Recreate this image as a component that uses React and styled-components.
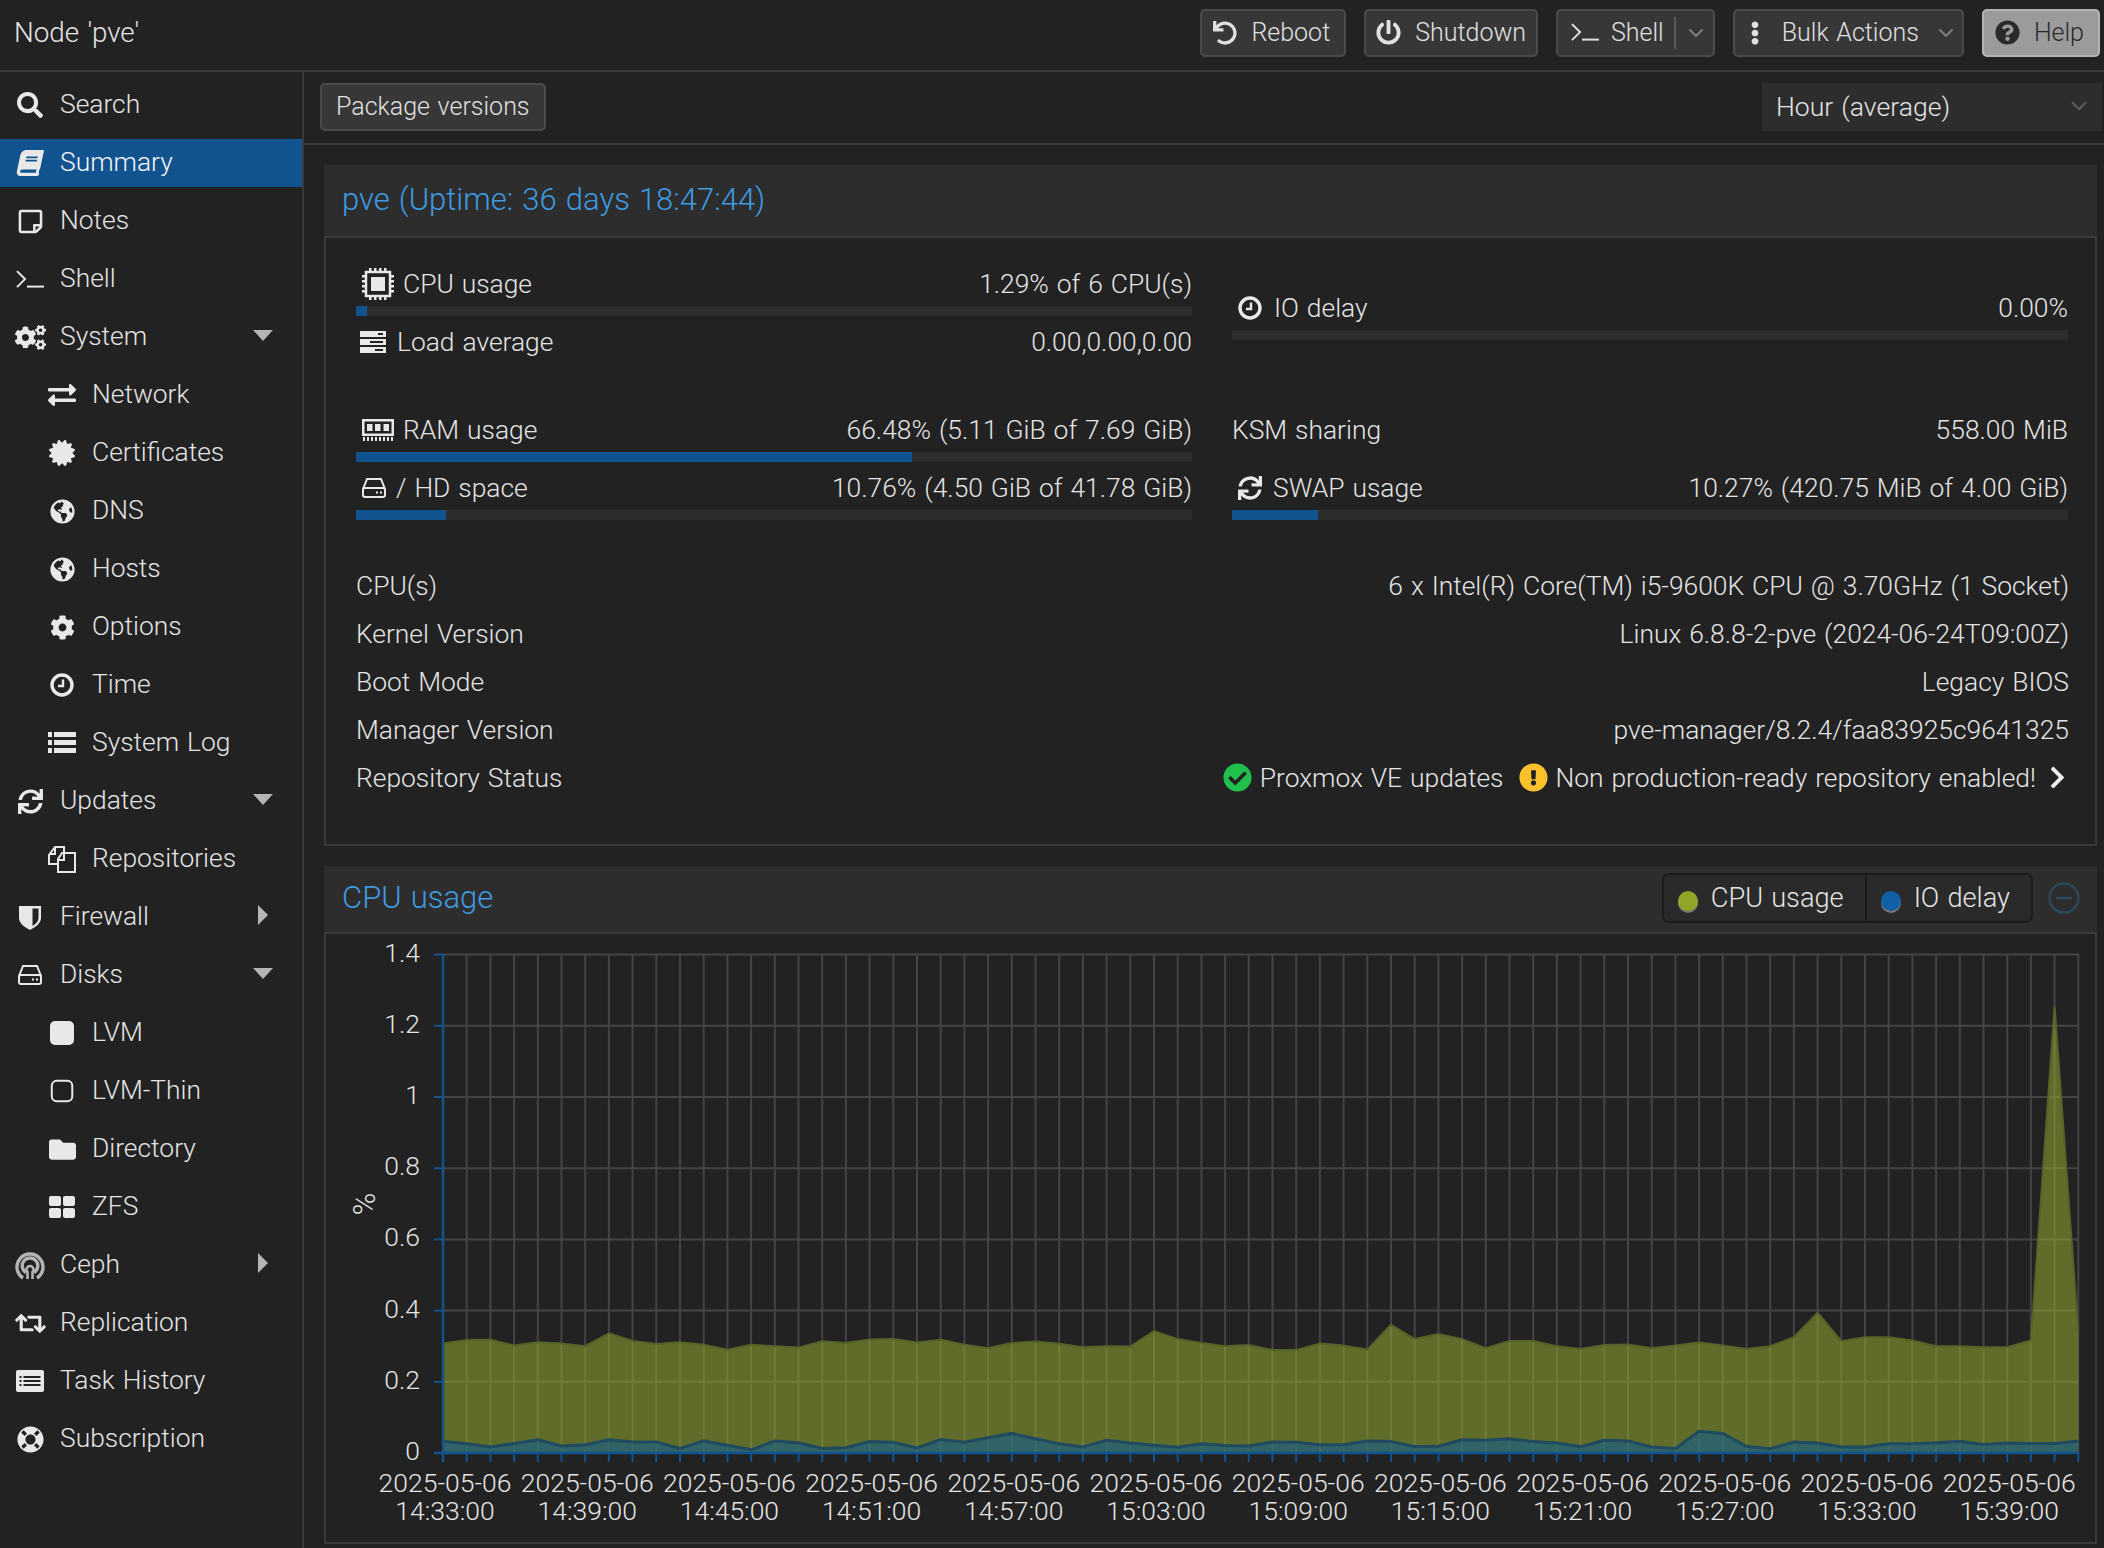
import React from 'react';
import styled, { createGlobalStyle } from 'styled-components';
import {
  FaSearch, FaBook, FaRegStickyNote, FaCogs, FaExchangeAlt, FaCertificate, FaGlobeAmericas, FaCog,
  FaSync, FaFolder, FaRetweet, FaLifeRing, FaUndo, FaPowerOff, FaEllipsisV, FaQuestionCircle,
  FaCheckCircle, FaExclamationCircle, FaChevronRight,
} from 'react-icons/fa';
import { ChevronDown } from 'lucide-react';

const Global = createGlobalStyle`
  html, body { margin: 0; padding: 0; height: 100%; overflow: hidden; background: #222; }
  body {
    font-family: Roboto, "Liberation Sans", Arial, sans-serif;
    font-weight: 300;
    font-size: 26.4px;
    word-spacing: 1.5px;
    color: #e4e4e4;
  }
  * { box-sizing: border-box; }
`;

const Page = styled.div`
  height: 100vh;
  display: flex;
  flex-direction: column;
`;

const Header = styled.header`
  height: 72px;
  flex: none;
  display: flex;
  align-items: flex-start;
  border-bottom: 2px solid #3a3a3a;
  padding: 9px 4px 0 14px;
`;

const NodeTitle = styled.div`
  font-size: 27.8px;
  line-height: 47px;
  margin-right: auto;
`;

const Actions = styled.div`
  display: flex;
  gap: 18px;
`;

const Button = styled.div`
  height: 48px;
  display: flex;
  align-items: center;
  gap: ${p => p.$gap || 14}px;
  padding: 0 ${p => p.$right || 14}px 1px ${p => p.$left || 11}px;
  font-size: 25px;
  white-space: nowrap;
  border-radius: 5px;
  background: #373737;
  border: 2px solid #4a4a4a;
  color: #e0e0e0;
  svg { flex: none; }
`;

const HelpButton = styled(Button)`
  background: #9b9b9b;
  border-color: #b4b4b4;
  color: #2a2a2a;
`;

const Splitter = styled.span`
  width: 2px;
  height: 32px;
  background: #5a5a5a;
  margin: 0 -4px 0 -2px;
`;

const Caret = styled(ChevronDown)`
  color: ${p => (p.$dim ? '#5c5c5c' : '#7f7f7f')};
`;

const Body = styled.div`
  flex: 1;
  min-height: 0;
  display: flex;
`;

const Sidebar = styled.nav`
  width: 304px;
  flex: none;
  border-right: 2px solid #3a3a3a;
  padding-top: 9px;
`;

const NavRow = styled.div`
  position: relative;
  height: 48px;
  margin-bottom: 10px;
  display: flex;
  align-items: center;
  padding-left: ${p => (p.$sub ? 44 : 12)}px;
  background: ${p => (p.$active ? '#10538f' : 'transparent')};
  color: ${p => (p.$active ? '#f4f4f4' : '#e4e4e4')};
`;

const NavLabel = styled.span`
  transform: translateY(-1px);
`;

const NavIcon = styled.span`
  width: 36px;
  height: 36px;
  margin-right: 12px;
  flex: none;
  display: flex;
  align-items: center;
  justify-content: center;
  color: #e8e8e8;
  font-size: ${p => p.$size || 26}px;
`;

const SlantBook = styled(FaBook)`
  transform: skewX(-12deg);
`;

const ArrowDown = styled.span`
  margin-left: auto;
  margin-right: 29px;
  width: 0;
  height: 0;
  border-left: 10px solid transparent;
  border-right: 10px solid transparent;
  border-top: 11px solid #b5b5b5;
  transform: translateY(-2px);
`;

const ArrowRight = styled.span`
  margin-left: auto;
  margin-right: 34px;
  width: 0;
  height: 0;
  border-top: 10px solid transparent;
  border-bottom: 10px solid transparent;
  border-left: 10px solid #b5b5b5;
  transform: translateY(-2px);
`;

const Main = styled.main`
  flex: 1;
  min-width: 0;
  display: flex;
  flex-direction: column;
`;

const Toolbar = styled.div`
  height: 73px;
  flex: none;
  display: flex;
  justify-content: space-between;
  padding: 11px 2px 0 16px;
  border-bottom: 2px solid #3a3a3a;
`;

const ToolButton = styled(Button)`
  padding: 0 14px 1px;
`;

const RangeSelect = styled.div`
  width: 340px;
  height: 48px;
  background: #2d2d2d;
  display: flex;
  align-items: center;
  justify-content: space-between;
  padding: 0 10px 2px 14px;
  font-size: 26.6px;
`;

const Content = styled.div`
  flex: 1;
  min-height: 0;
  padding: 20px 7px 0 20px;
  display: flex;
  flex-direction: column;
  gap: 20px;
`;

const PanelHead = styled.div`
  height: ${p => p.$height}px;
  background: #2d2d2d;
  display: flex;
  align-items: center;
  justify-content: space-between;
  padding: 0 17px 3px 18px;
`;

const PanelTitle = styled.div`
  font-size: 31px;
  color: #3d9be0;
`;

const PanelBody = styled.div`
  border: 2px solid #3a3a3a;
  padding: ${p => p.$padding || 0};
`;

const StatGrid = styled.div`
  display: grid;
  grid-template-columns: 836px 836px;
  column-gap: 40px;
`;

const StatCol = styled.div`
  min-height: ${p => p.$min || 0}px;
  padding-top: ${p => p.$top || 0}px;
`;

const Stat = styled.div`
  height: 58px;
`;

const StatLine = styled.div`
  height: 36px;
  margin-bottom: 4px;
  padding-bottom: 1px;
  display: flex;
  align-items: center;
  justify-content: space-between;
`;

const StatLabel = styled.span`
  display: flex;
  align-items: center;
  gap: ${p => p.$gap || 9}px;
`;

const StatIcon = styled.span`
  width: ${p => p.$width || 26}px;
  margin-left: ${p => p.$left || 4}px;
  display: flex;
  justify-content: center;
  font-size: ${p => p.$size || 24}px;
  color: #e8e8e8;
`;

const Track = styled.div`
  height: 10px;
  background: #2d2d2d;
`;

const Fill = styled.div`
  height: 100%;
  background: #10538f;
`;

const InfoList = styled.div`
  margin-top: 34px;
`;

const InfoRow = styled.div`
  height: 48px;
  padding-bottom: 1px;
  display: flex;
  align-items: center;
  justify-content: space-between;
`;

const RepoStatus = styled.div`
  display: flex;
  align-items: center;
`;

const StatusIcon = styled.span`
  display: flex;
  font-size: 29px;
  color: ${p => p.$color};
  margin: 0 8px 0 ${p => p.$left || 0}px;
  background: radial-gradient(circle, #222 48%, transparent 50%);
`;

const More = styled.span`
  display: flex;
  font-size: 25px;
  color: #eee;
  margin: 0 -1px 0 9px;
`;

const Legend = styled.div`
  display: flex;
  align-items: center;
  gap: 15px;
`;

const LegendBox = styled.div`
  height: 50px;
  display: flex;
  border: 2px solid #1b1b1b;
  border-radius: 7px;
  background: #2a2a2a;
  font-size: 27.2px;
`;

const LegendItem = styled.div`
  display: flex;
  align-items: center;
  gap: 13px;
  padding: 0 21px 0 14px;
  & + & { border-left: 2px solid #1b1b1b; }
`;

const LegendDot = styled.span`
  width: 20px;
  height: 20px;
  margin-top: 6px;
  border-radius: 50%;
  background: ${p => p.$color};
  box-shadow: 0 2px 0 #777;
`;

const ChartSvg = styled.svg`
  display: block;
  text {
    font-size: 26.5px;
    fill: #e4e4e4;
  }
  text.unit {
    font-size: 31px;
  }
`;

// icons the packages do not have in this shape
const Prompt = ({ w = 28 }) => (
  <svg width={w} height={w * 0.65} viewBox="0 0 28 18" fill="none" stroke="currentColor" strokeWidth="2">
    <polyline points="1,1 9,9 1,17" />
    <line x1="11" y1="16.5" x2="28" y2="16.5" />
  </svg>
);

const Chip = () => (
  <svg width="32" height="32" viewBox="0 0 32 32" fill="currentColor">
    <rect x="4" y="4" width="24" height="24" fill="none" stroke="currentColor" strokeWidth="2.5" />
    <rect x="9" y="9" width="14" height="14" />
    {[7, 12, 17, 22].map(p => (
      <g key={p}>
        <rect x={p} y="0" width="2.5" height="3" />
        <rect x={p} y="29" width="2.5" height="3" />
        <rect x="0" y={p} width="3" height="2.5" />
        <rect x="29" y={p} width="3" height="2.5" />
      </g>
    ))}
  </svg>
);

const Ram = () => (
  <svg width="32" height="22" viewBox="0 0 32 22" fill="currentColor">
    <path fillRule="evenodd" d="M0 0h32v17H0zM2.500 2.500v12h27v-12zM5 5h5.500v7H5zM13 5h5.500v7H13zM21.500 5H27v7h-5.500z" />
    {[1, 5, 9, 13, 17, 21, 25, 29].map(x => <rect key={x} x={x} y="18" width="2" height="4" />)}
  </svg>
);

const Tasks = () => (
  <svg width="26" height="22" viewBox="0 0 26 22" fill="currentColor">
    <path fillRule="evenodd" d="M0 0h26v6H0zM18 2v2h5V2zM0 8h26v6H0zM10 10v2h13v-2zM0 16h26v6H0zM15 18v2h8v-2z" />
  </svg>
);

const SysLog = () => (
  <svg width="28" height="22" viewBox="0 0 28 22" fill="currentColor">
    {[0, 8, 16].map(y => (
      <g key={y}>
        <rect x="0" y={y} width="4" height="5" />
        <rect x="6" y={y} width="22" height="5" />
      </g>
    ))}
  </svg>
);

const Clock = ({ s = 24 }) => (
  <svg width={s} height={s} viewBox="0 0 24 24" fill="none" stroke="currentColor">
    <circle cx="12" cy="12" r="10" strokeWidth="3.400" />
    <path d="M13 6.500v6.500H8" strokeWidth="2.400" />
  </svg>
);

const Hdd = () => (
  <svg width="24" height="20" viewBox="0 0 24 20" fill="none" stroke="currentColor" strokeWidth="2">
    <path d="M1 11L5 1h14l4 10" />
    <rect x="1" y="10" width="22" height="9" rx="2" />
    <rect x="14" y="13.500" width="2" height="2" fill="currentColor" stroke="none" />
    <rect x="18" y="13.500" width="2" height="2" fill="currentColor" stroke="none" />
  </svg>
);

const Files = () => (
  <svg width="28" height="28" viewBox="0 0 28 28" fill="none" stroke="currentColor" strokeWidth="2">
    <path d="M10 19H1v-9l6-8h9v6" />
    <path d="M7 2v7H1" />
    <path d="M14 8h13v19H10V14z" />
    <path d="M16 8v7h-6" />
  </svg>
);

const Shield = () => (
  <svg width="22" height="25" viewBox="0 0 22 25" fill="currentColor">
    <path fillRule="evenodd" d="M0 1h22v12c0 5-5 9-11 12C5 22 0 18 0 13zM13.500 3.500V21c3.500-2 6-5 6-8V3.500z" />
  </svg>
);

const Rounded = ({ filled }) => (
  <svg width="24" height="24" viewBox="0 0 24 24">
    {filled
      ? <rect x="0" y="0" width="24" height="24" rx="5" fill="currentColor" />
      : <rect x="1" y="1" width="20.500" height="20.500" rx="5" fill="none" stroke="currentColor" strokeWidth="2" transform="translate(.8 .8)" />}
  </svg>
);

const Blocks = () => (
  <svg width="26" height="22" viewBox="0 0 26 22" fill="currentColor">
    <rect x="0" y="0" width="12" height="10" rx="2" />
    <rect x="14" y="0" width="12" height="10" rx="2" />
    <rect x="0" y="12" width="12" height="10" rx="2" />
    <rect x="14" y="12" width="12" height="10" rx="2" />
  </svg>
);

const TaskList = () => (
  <svg width="28" height="22" viewBox="0 0 28 22">
    <rect x="0" y="0" width="28" height="22" rx="2" fill="currentColor" />
    {[7, 11, 15].map(y => (
      <path key={y} d={`M3.500 ${y}h2M7.500 ${y}h17`} stroke="#222" strokeWidth="2" />
    ))}
  </svg>
);

const Ceph = () => (
  <svg width="30" height="30" viewBox="0 0 30 30" fill="none" stroke="#b4b4b4" strokeWidth="3.400">
    <path d="M8 28A13 13 0 1 1 22 28" />
    <path d="M11 22.500A7.800 7.800 0 1 1 19 22.500" />
    <path d="M12.500 29v-7a3.500 3.500 0 1 1 5 0v7" strokeWidth="2.600" />
  </svg>
);

const Collapse = () => (
  <svg width="32" height="32" viewBox="0 0 32 32" fill="none" stroke="#2b4857" strokeWidth="2.500">
    <circle cx="16" cy="16" r="14.500" />
    <line x1="8" y1="16" x2="24" y2="16" />
  </svg>
);

const NAV = [
  { label: 'Search', icon: <FaSearch /> },
  { label: 'Summary', icon: <SlantBook />, active: true },
  { label: 'Notes', icon: <FaRegStickyNote />, size: 27 },
  { label: 'Shell', icon: <Prompt /> },
  { label: 'System', icon: <FaCogs />, size: 31, arrow: 'down' },
  { label: 'Network', icon: <FaExchangeAlt />, sub: true, size: 28 },
  { label: 'Certificates', icon: <FaCertificate />, sub: true },
  { label: 'DNS', icon: <FaGlobeAmericas />, sub: true, size: 25 },
  { label: 'Hosts', icon: <FaGlobeAmericas />, sub: true, size: 25 },
  { label: 'Options', icon: <FaCog />, sub: true, size: 25 },
  { label: 'Time', icon: <Clock />, sub: true },
  { label: 'System Log', icon: <SysLog />, sub: true },
  { label: 'Updates', icon: <FaSync />, arrow: 'down', size: 25 },
  { label: 'Repositories', icon: <Files />, sub: true },
  { label: 'Firewall', icon: <Shield />, arrow: 'right' },
  { label: 'Disks', icon: <Hdd />, arrow: 'down' },
  { label: 'LVM', icon: <Rounded filled />, sub: true },
  { label: 'LVM-Thin', icon: <Rounded />, sub: true },
  { label: 'Directory', icon: <FaFolder />, sub: true, size: 27 },
  { label: 'ZFS', icon: <Blocks />, sub: true },
  { label: 'Ceph', icon: <Ceph />, arrow: 'right' },
  { label: 'Replication', icon: <FaRetweet />, size: 31 },
  { label: 'Task History', icon: <TaskList /> },
  { label: 'Subscription', icon: <FaLifeRing />, size: 27 },
];

const INFO = [
  ['CPU(s)', '6 x Intel(R) Core(TM) i5-9600K CPU @ 3.70GHz (1 Socket)'],
  ['Kernel Version', 'Linux 6.8.8-2-pve (2024-06-24T09:00Z)'],
  ['Boot Mode', 'Legacy BIOS'],
  ['Manager Version', 'pve-manager/8.2.4/faa83925c9641325'],
];

const CPU = [
  .308, .317, .318, .302, .311, .308, .3, .336, .315, .306, .311, .304, .29, .304, .3, .296, .314, .309, .319, .32,
  .31, .318, .304, .294, .309, .313, .307, .297, .3, .299, .342, .32, .309, .3, .303, .289, .289, .308, .302, .29,
  .36, .32, .334, .32, .294, .315, .315, .3, .292, .303, .305, .294, .302, .31, .302, .292, .3, .325, .394, .314,
  .325, .325, .316, .3, .3, .297, .297, .316, 1.254, .337,
];

const IO = [
  .033, .026, .017, .027, .037, .02, .023, .037, .031, .031, .013, .034, .022, .009, .034, .029, .013, .015, .032, .03,
  .014, .038, .03, .043, .055, .04, .026, .017, .036, .028, .022, .016, .026, .021, .02, .031, .03, .023, .023, .034,
  .032, .018, .019, .037, .036, .04, .032, .028, .018, .036, .034, .017, .013, .061, .055, .019, .012, .031, .028, .017,
  .017, .026, .026, .029, .033, .024, .028, .027, .027, .034,
];

const LABELS = ['14:33:00', '14:39:00', '14:45:00', '14:51:00', '14:57:00', '15:03:00', '15:09:00', '15:15:00', '15:21:00', '15:27:00', '15:33:00', '15:39:00'];
const TICKS = ['1.4', '1.2', '1', '0.8', '0.6', '0.4', '0.2', '0'];

const X0 = 117;
const STEP = 23.7;
const Y0 = 519;
const UNIT = 356;
const px = i => +(X0 + i * STEP).toFixed(1);
const py = v => +(Y0 - v * UNIT).toFixed(1);
const line = data => data.map((v, i) => `${px(i)},${py(v)}`).join(' ');
const area = data => `${px(0)},${Y0} ${line(data)} ${px(69)},${Y0}`;

const Chart = () => (
  <ChartSvg width="1768" height="608" viewBox="0 0 1768 608">
    {CPU.map((_, i) => (
      <line key={i} x1={px(i)} x2={px(i)} y1="20" y2={Y0} stroke="#444" strokeWidth="2" />
    ))}
    {TICKS.map((t, i) => (
      <line key={t} x1={X0} x2={px(69)} y1={py(1.4 - i * 0.2)} y2={py(1.4 - i * 0.2)} stroke="#444" strokeWidth="2" />
    ))}
    <polygon points={area(CPU)} fill="#91a830" fillOpacity=".56" />
    <polyline points={line(CPU)} fill="none" stroke="#566328" strokeWidth="2" />
    <polygon points={area(IO)} fill="#0b5a96" fillOpacity=".55" />
    <polyline points={line(IO)} fill="none" stroke="#1f4a60" strokeWidth="3" />
    {CPU.map((_, i) => (
      <line key={i} x1={px(i)} x2={px(i)} y1={Y0} y2={Y0 + 9} stroke="#10538f" strokeWidth="2" />
    ))}
    <line x1={X0} x2={X0} y1="20" y2={Y0 + 9} stroke="#10538f" strokeWidth="2.500" />
    <line x1={X0 - 9} x2={px(69)} y1={Y0} y2={Y0} stroke="#10538f" strokeWidth="2.500" />
    {TICKS.map((t, i) => (
      <g key={t}>
        <line x1={X0 - 9} x2={X0} y1={py(1.4 - i * 0.2)} y2={py(1.4 - i * 0.2)} stroke="#10538f" strokeWidth="2" />
        <text x="94" y={py(1.4 - i * 0.2) + 7} textAnchor="end">{t}</text>
      </g>
    ))}
    <text className="unit" transform="rotate(-90 38 270)" x="38" y="281" textAnchor="middle">%</text>
    {LABELS.map((l, i) => (
      <text key={l} textAnchor="middle" y="558">
        <tspan x={X0 + 2 + i * STEP * 6}>2025-05-06</tspan>
        <tspan x={X0 + 2 + i * STEP * 6} dy="28">{l}</tspan>
      </text>
    ))}
  </ChartSvg>
);

export default function App() {
  return (
    <Page>
      <Global />
      <Header>
        <NodeTitle>Node 'pve'</NodeTitle>
        <Actions>
          <Button><FaUndo size={24} />Reboot</Button>
          <Button $left={10} $right={10}><FaPowerOff size={25} />Shutdown</Button>
          <Button $left={13} $right={5} $gap={12}><Prompt />Shell<Splitter /><Caret size={24} /></Button>
          <Button $left={8} $right={4} $gap={15}><FaEllipsisV size={24} />Bulk Actions<Caret size={24} /></Button>
          <HelpButton><FaQuestionCircle size={25} />Help</HelpButton>
        </Actions>
      </Header>
      <Body>
        <Sidebar>
          {NAV.map(n => (
            <NavRow key={n.label} $sub={n.sub} $active={n.active}>
              <NavIcon $size={n.size}>{n.icon}</NavIcon>
              <NavLabel>{n.label}</NavLabel>
              {n.arrow === 'down' && <ArrowDown />}
              {n.arrow === 'right' && <ArrowRight />}
            </NavRow>
          ))}
        </Sidebar>
        <Main>
          <Toolbar>
            <ToolButton>Package versions</ToolButton>
            <RangeSelect>Hour (average)<Caret size={26} $dim /></RangeSelect>
          </Toolbar>
          <Content>
            <section>
              <PanelHead $height={71}><PanelTitle>pve (Uptime: 36 days 18:47:44)</PanelTitle></PanelHead>
              <PanelBody $padding="28px 26px 42px 30px">
                <StatGrid>
                  <StatCol>
                    <Stat>
                      <StatLine>
                        <StatLabel><StatIcon $width={32} $left={6}><Chip /></StatIcon>CPU usage</StatLabel>
                        <span>1.29% of 6 CPU(s)</span>
                      </StatLine>
                      <Track><Fill style={{ width: '1.3%' }} /></Track>
                    </Stat>
                    <Stat>
                      <StatLine>
                        <StatLabel $gap={11}><StatIcon><Tasks /></StatIcon>Load average</StatLabel>
                        <span>0.00,0.00,0.00</span>
                      </StatLine>
                    </Stat>
                  </StatCol>
                  <StatCol $top={24} $min={146}>
                    <Stat>
                      <StatLine>
                        <StatLabel $gap={11}><StatIcon $left={5}><Clock /></StatIcon>IO delay</StatLabel>
                        <span>0.00%</span>
                      </StatLine>
                      <Track />
                    </Stat>
                  </StatCol>
                  <StatCol>
                    <Stat>
                      <StatLine>
                        <StatLabel $gap={9}><StatIcon $width={32} $left={6}><Ram /></StatIcon>RAM usage</StatLabel>
                        <span>66.48% (5.11 GiB of 7.69 GiB)</span>
                      </StatLine>
                      <Track><Fill style={{ width: '66.48%' }} /></Track>
                    </Stat>
                    <Stat>
                      <StatLine>
                        <StatLabel $gap={9}><StatIcon $left={5}><Hdd /></StatIcon>/ HD space</StatLabel>
                        <span>10.76% (4.50 GiB of 41.78 GiB)</span>
                      </StatLine>
                      <Track><Fill style={{ width: '10.76%' }} /></Track>
                    </Stat>
                  </StatCol>
                  <StatCol>
                    <Stat>
                      <StatLine>
                        <span>KSM sharing</span>
                        <span>558.00 MiB</span>
                      </StatLine>
                    </Stat>
                    <Stat>
                      <StatLine>
                        <StatLabel $gap={10}><StatIcon $left={5}><FaSync /></StatIcon>SWAP usage</StatLabel>
                        <span>10.27% (420.75 MiB of 4.00 GiB)</span>
                      </StatLine>
                      <Track><Fill style={{ width: '10.27%' }} /></Track>
                    </Stat>
                  </StatCol>
                </StatGrid>
                <InfoList>
                  {INFO.map(([k, v]) => (
                    <InfoRow key={k}><span>{k}</span><span>{v}</span></InfoRow>
                  ))}
                  <InfoRow>
                    <span>Repository Status</span>
                    <RepoStatus>
                      <StatusIcon $color="#21bf4b"><FaCheckCircle /></StatusIcon>
                      Proxmox VE updates
                      <StatusIcon $color="#fbc02d" $left={15}><FaExclamationCircle /></StatusIcon>
                      Non production-ready repository enabled!
                      <More><FaChevronRight /></More>
                    </RepoStatus>
                  </InfoRow>
                </InfoList>
              </PanelBody>
            </section>
            <section>
              <PanelHead $height={66}>
                <PanelTitle>CPU usage</PanelTitle>
                <Legend>
                  <LegendBox>
                    <LegendItem><LegendDot $color="#8fa626" />CPU usage</LegendItem>
                    <LegendItem><LegendDot $color="#115fa6" />IO delay</LegendItem>
                  </LegendBox>
                  <Collapse />
                </Legend>
              </PanelHead>
              <PanelBody><Chart /></PanelBody>
            </section>
          </Content>
        </Main>
      </Body>
    </Page>
  );
}
